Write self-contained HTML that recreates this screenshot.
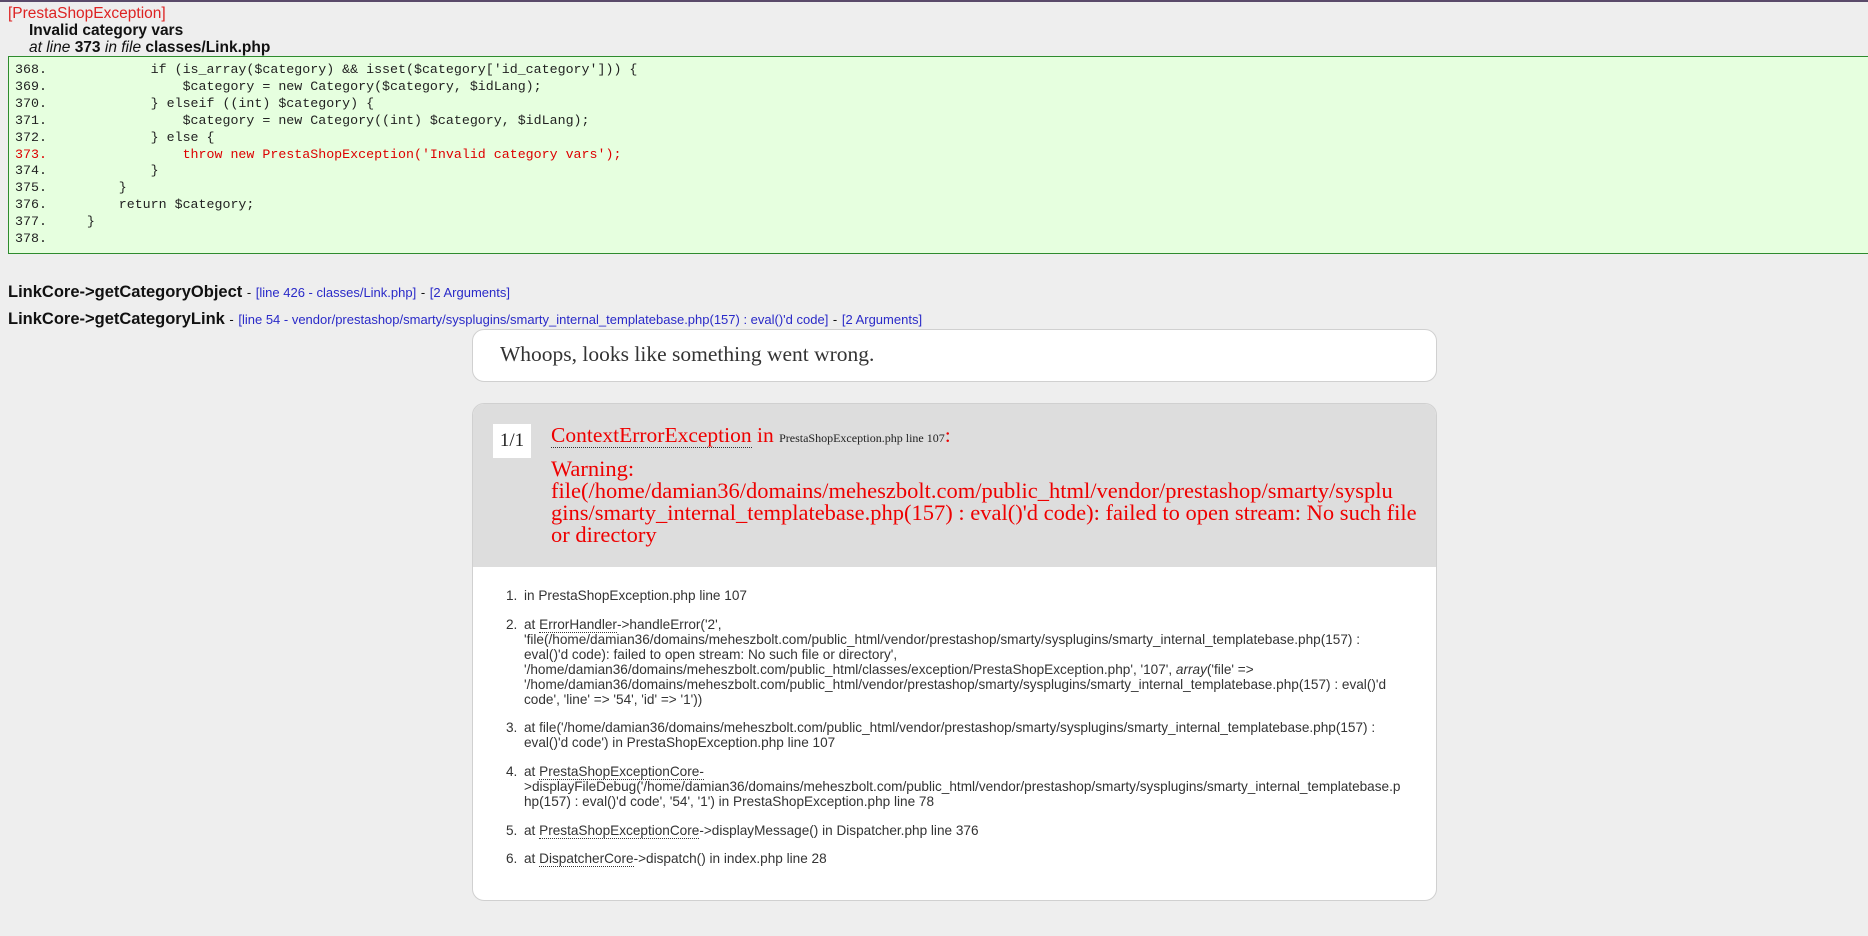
<!DOCTYPE html>
<html><head><meta charset="utf-8"><style>
*{margin:0;padding:0;box-sizing:border-box}
body{width:1868px;height:936px;background:#eeeeee;position:relative;overflow:hidden;font-family:"Liberation Sans",sans-serif}
.top{position:absolute;left:0;top:0;width:1868px;height:2px;background:#5a4a6a}
.abs{position:absolute;white-space:nowrap}
.code{position:absolute;left:8px;top:56px;width:1862px;height:198px;background:#e6ffdf;border:1px solid #2e8b2e;padding-top:5px}
.code div{font-family:"Liberation Mono",monospace;font-size:13.3px;line-height:16.9px;color:#222;white-space:pre;padding-left:6px}
.code .r{color:#d00}
.lc{font-size:16.5px;font-weight:bold;color:#111}
.lk{font-size:13px;color:#2a2ac8;font-weight:normal}
.serif{font-family:"Liberation Serif",serif}
.box1{position:absolute;left:472px;top:329px;width:965px;height:53px;background:#fff;border:1px solid #d0d0d0;border-radius:12px}
.box2{position:absolute;left:472px;top:403px;width:965px;height:498px;background:#fff;border:1px solid #d0d0d0;border-radius:12px;overflow:hidden}
.hdr{position:absolute;left:0;top:0;width:100%;height:163px;background:#dddddd}
.badge{position:absolute;left:20px;top:20px;width:38px;height:34px;background:#fff;font-size:19px;text-align:center;line-height:34px;color:#222}
ol{position:absolute;left:33px;top:184px;width:920px;font-size:13.6px;line-height:15px;color:#333;list-style:none}
ol li{margin-bottom:13.7px;position:relative;padding-left:18px}
ol li b{position:absolute;left:0;font-weight:normal}
.u{border-bottom:1px dotted #333}
</style></head><body>
<div class="top"></div>
<div class="abs" style="left:8px;top:5px;font-size:15.5px;color:#d22">[PrestaShopException]</div>
<div class="abs" style="left:29px;top:22px;font-size:15.5px;font-weight:bold;color:#111">Invalid category vars</div>
<div class="abs" style="left:29px;top:39px;font-size:15.5px;color:#111"><i>at line</i> <b>373</b> <i>in file</i> <b>classes/Link.php</b></div>
<div class="code">
<div>368.             if (is_array($category) &amp;&amp; isset($category['id_category'])) {</div>
<div>369.                 $category = new Category($category, $idLang);</div>
<div>370.             } elseif ((int) $category) {</div>
<div>371.                 $category = new Category((int) $category, $idLang);</div>
<div>372.             } else {</div>
<div class="r">373.                 throw new PrestaShopException('Invalid category vars');</div>
<div>374.             }</div>
<div>375.         }</div>
<div>376.         return $category;</div>
<div>377.     }</div>
<div>378.</div>
</div>
<div class="abs lc" style="left:8px;top:283px">LinkCore-&gt;getCategoryObject <span style="font-weight:normal;font-size:13px">-</span> <span class="lk">[line 426 - classes/Link.php]</span> <span style="font-weight:normal;font-size:13px">-</span> <span class="lk">[2 Arguments]</span></div>
<div class="abs lc" style="left:8px;top:310px">LinkCore-&gt;getCategoryLink <span style="font-weight:normal;font-size:13px">-</span> <span class="lk">[line 54 - vendor/prestashop/smarty/sysplugins/smarty_internal_templatebase.php(157) : eval()'d code]</span> <span style="font-weight:normal;font-size:13px">-</span> <span class="lk">[2 Arguments]</span></div>
<div class="box1"><div class="abs serif" style="left:27px;top:12px;font-size:21.5px;color:#333">Whoops, looks like something went wrong.</div></div>
<div class="box2">
<div class="hdr">
<div class="badge serif">1/1</div>
<div class="abs serif" style="left:78px;top:19px;font-size:21.5px;color:#e00"><span style="border-bottom:1px dotted #333">ContextErrorException</span> in <span style="font-size:12px;color:#222">PrestaShopException.php line 107</span>:</div>
<div class="abs serif" style="left:78px;top:54px;font-size:22.5px;line-height:22px;color:#e00;white-space:nowrap">Warning:<br>file(/home/damian36/domains/meheszbolt.com/public_html/vendor/prestashop/smarty/sysplu<br>gins/smarty_internal_templatebase.php(157) : eval()'d code): failed to open stream: No such file<br>or directory</div>
</div>
<ol>
<li><b>1.</b>in PrestaShopException.php line 107</li>
<li><b>2.</b>at <span class="u">ErrorHandler</span>-&gt;handleError('2',<br>'file(/home/damian36/domains/meheszbolt.com/public_html/vendor/prestashop/smarty/sysplugins/smarty_internal_templatebase.php(157) :<br>eval()'d code): failed to open stream: No such file or directory',<br>'/home/damian36/domains/meheszbolt.com/public_html/classes/exception/PrestaShopException.php', '107', <i>array</i>('file' =&gt;<br>'/home/damian36/domains/meheszbolt.com/public_html/vendor/prestashop/smarty/sysplugins/smarty_internal_templatebase.php(157) : eval()'d<br>code', 'line' =&gt; '54', 'id' =&gt; '1'))</li>
<li><b>3.</b>at file('/home/damian36/domains/meheszbolt.com/public_html/vendor/prestashop/smarty/sysplugins/smarty_internal_templatebase.php(157) :<br>eval()'d code') in PrestaShopException.php line 107</li>
<li><b>4.</b>at <span class="u">PrestaShopExceptionCore-</span><br>&gt;displayFileDebug('/home/damian36/domains/meheszbolt.com/public_html/vendor/prestashop/smarty/sysplugins/smarty_internal_templatebase.p<br>hp(157) : eval()'d code', '54', '1') in PrestaShopException.php line 78</li>
<li><b>5.</b>at <span class="u">PrestaShopExceptionCore</span>-&gt;displayMessage() in Dispatcher.php line 376</li>
<li><b>6.</b>at <span class="u">DispatcherCore</span>-&gt;dispatch() in index.php line 28</li>
</ol>
</div>
</body></html>
